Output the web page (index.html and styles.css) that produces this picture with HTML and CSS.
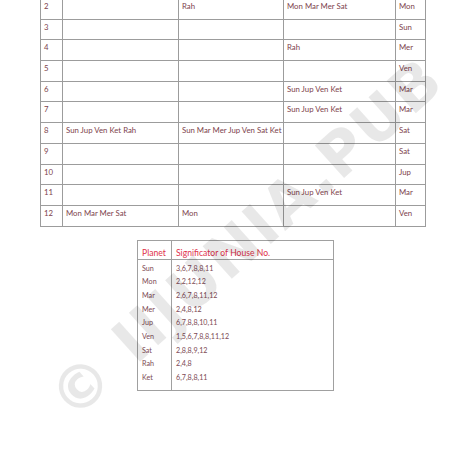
FILE: index.html
```html
<!DOCTYPE html>
<html>
<head>
<meta charset="utf-8">
<link rel="stylesheet" href="styles.css">
</head>
<body>
<div class="page">
  <table class="houses">
    <colgroup>
      <col class="c0"><col class="c1"><col class="c2"><col class="c3"><col class="c4">
    </colgroup>
    <tr><td>2</td><td></td><td>Rah</td><td>Mon Mar Mer Sat</td><td>Mon</td></tr>
    <tr><td>3</td><td></td><td></td><td></td><td>Sun</td></tr>
    <tr><td>4</td><td></td><td></td><td>Rah</td><td>Mer</td></tr>
    <tr><td>5</td><td></td><td></td><td></td><td>Ven</td></tr>
    <tr><td>6</td><td></td><td></td><td>Sun Jup Ven Ket</td><td>Mar</td></tr>
    <tr><td>7</td><td></td><td></td><td>Sun Jup Ven Ket</td><td>Mar</td></tr>
    <tr><td>8</td><td>Sun Jup Ven Ket Rah</td><td>Sun Mar Mer Jup Ven Sat Ket</td><td></td><td>Sat</td></tr>
    <tr><td>9</td><td></td><td></td><td></td><td>Sat</td></tr>
    <tr><td>10</td><td></td><td></td><td></td><td>Jup</td></tr>
    <tr><td>11</td><td></td><td></td><td>Sun Jup Ven Ket</td><td>Mar</td></tr>
    <tr><td>12</td><td>Mon Mar Mer Sat</td><td>Mon</td><td></td><td>Ven</td></tr>
  </table>

  <div class="sig">
    <div class="sig-col planets">
      <div class="head">Planet</div>
      <div class="body">
        <div>Sun</div><div>Mon</div><div>Mar</div><div>Mer</div><div>Jup</div><div>Ven</div><div>Sat</div><div>Rah</div><div>Ket</div>
      </div>
    </div>
    <div class="sig-col houses-no">
      <div class="head">Significator of House No.</div>
      <div class="body">
        <div>3,6,7,8,8,11</div><div>2,2,12,12</div><div>2,6,7,8,11,12</div><div>2,4,8,12</div><div>6,7,8,8,10,11</div><div>1,5,6,7,8,8,11,12</div><div>2,8,8,9,12</div><div>2,4,8</div><div>6,7,8,8,11</div>
      </div>
    </div>
  </div>
</div>
<div class="watermark">© IIJUNIA.PUB</div>
</body>
</html>
```
FILE: styles.css
```css
html, body {
  margin: 0;
  padding: 0;
  background: #ffffff;
  width: 465px;
  height: 465px;
  overflow: hidden;
  position: relative;
  font-family: Lato, "Open Sans", sans-serif;
}

.page {
  padding-left: 40px;
  margin-top: -2px;
}

.houses {
  border-collapse: collapse;
  table-layout: fixed;
  width: 385px;
  font-size: 7.8px;
  color: #7d3f4c;
}

.houses col.c0 { width: 22px; }
.houses col.c1 { width: 116px; }
.houses col.c2 { width: 105px; }
.houses col.c3 { width: 112px; }
.houses col.c4 { width: 30px; }

.houses tr { height: 20.7px; }

.houses td {
  border: 1px solid #9c9c9c;
  vertical-align: top;
  padding: 3px 3px 0 3px;
  line-height: 9px;
  white-space: nowrap;
}

.sig {
  margin-top: 13px;
  margin-left: 97px;
  width: 197px;
  height: 151px;
  border: 1px solid #a0a0a0;
  display: flex;
  box-sizing: border-box;
}

.sig-col .head {
  height: 19px;
  box-sizing: border-box;
  border-bottom: 1px solid #a0a0a0;
  color: #e0314b;
  font-size: 8.6px;
  line-height: 10px;
  padding: 7px 0 0 4px;
}

.sig-col .body {
  padding: 2px 0 0 4px;
  font-size: 7.2px;
  color: #7d4a54;
}

.sig-col .body div {
  height: 13.7px;
  line-height: 13.7px;
}

.planets {
  width: 33px;
  border-right: 1px solid #a0a0a0;
  flex: none;
}

.houses-no {
  flex: 1;
}

.watermark {
  position: absolute;
  left: 246px;
  top: 238px;
  transform: translate(-50%, -50%) rotate(-42deg);
  font-family: "DejaVu Sans", sans-serif;
  font-weight: bold;
  font-size: 60px;
  letter-spacing: 2px;
  color: rgba(0, 0, 0, 0.09);
  white-space: nowrap;
  pointer-events: none;
}
```
